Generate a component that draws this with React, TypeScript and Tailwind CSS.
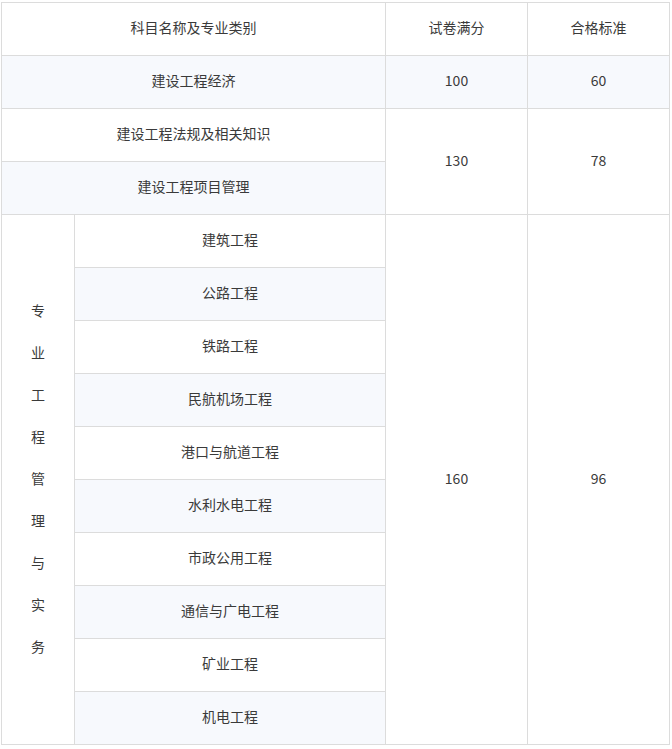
import React from 'react';

const SPECIALTIES = [
  '建筑工程',
  '公路工程',
  '铁路工程',
  '民航机场工程',
  '港口与航道工程',
  '水利水电工程',
  '市政公用工程',
  '通信与广电工程',
  '矿业工程',
  '机电工程',
];

const VERTICAL_LABEL = '专业工程管理与实务'.split('');

// text sits a touch above centre in the original
const cell = 'flex items-center justify-center text-center pb-[3px]';

export default function App() {
  return (
    <div className="bg-white w-[672px] h-[749px] pt-[2px] pl-px font-['Noto_Sans_CJK_SC','Noto_Sans',sans-serif] text-[14px] text-[#3a3a3a]">
      <div className="grid w-[669px] grid-cols-[72px_310px_141px_141px] grid-rows-[repeat(14,52px)] gap-px border border-[#dcdcdc] bg-[#dcdcdc]">
        {/* Header */}
        <div className={`${cell} col-span-2 bg-white`}>科目名称及专业类别</div>
        <div className={`${cell} bg-white`}>试卷满分</div>
        <div className={`${cell} bg-white`}>合格标准</div>

        {/* 经济 */}
        <div className={`${cell} col-span-2 bg-[#f7f9fd]`}>建设工程经济</div>
        <div className={`${cell} bg-[#f7f9fd]`}>100</div>
        <div className={`${cell} bg-[#f7f9fd]`}>60</div>

        {/* 法规 + 项目管理 */}
        <div className={`${cell} col-span-2 bg-white`}>建设工程法规及相关知识</div>
        <div className={`${cell} row-span-2 bg-white`}>130</div>
        <div className={`${cell} row-span-2 bg-white`}>78</div>
        <div className={`${cell} col-span-2 bg-[#f7f9fd]`}>建设工程项目管理</div>

        {/* 专业工程管理与实务 */}
        <div className="row-span-10 flex flex-col items-center justify-center pb-[4px] bg-white">
          {VERTICAL_LABEL.map((ch, i) => (
            <span key={i} className="block leading-[42px]">
              {ch}
            </span>
          ))}
        </div>
        <div className="row-span-10 grid grid-rows-[repeat(10,52px)] gap-px bg-[#dcdcdc]">
          {SPECIALTIES.map((name, i) => (
            <div key={name} className={`${cell} ${i % 2 === 1 ? 'bg-[#f7f9fd]' : 'bg-white'}`}>
              {name}
            </div>
          ))}
        </div>
        <div className={`${cell} row-span-10 bg-white`}>160</div>
        <div className={`${cell} row-span-10 bg-white`}>96</div>
      </div>
    </div>
  );
}
